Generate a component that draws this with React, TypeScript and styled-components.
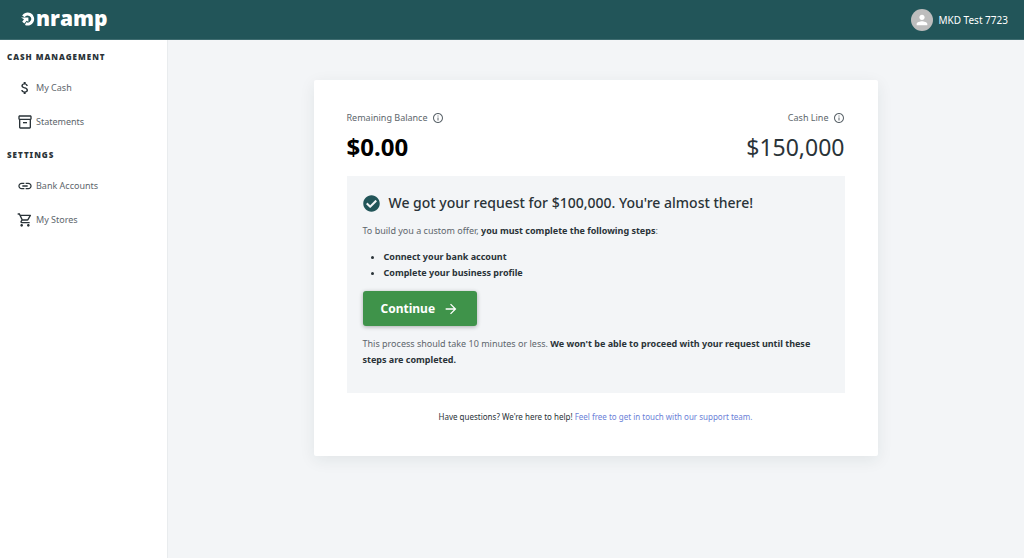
import React from 'react';
import styled, { createGlobalStyle } from 'styled-components';
import {
  MdArrowForward,
  MdAttachMoney,
  MdInfoOutline,
  MdLink,
  MdOutlineInventory2,
  MdOutlineShoppingCart,
  MdPerson,
} from 'react-icons/md';
import { FaCheckCircle } from 'react-icons/fa';

const color = {
  teal: '#225559',
  page: '#f3f5f7',
  ink: '#2a3338',
  muted: '#5d666c',
  green: '#3f934a',
  link: '#6b7fd7',
};

const GlobalStyle = createGlobalStyle`
  *, *::before, *::after { box-sizing: border-box; }
  body {
    margin: 0;
    background: ${color.page};
    color: ${color.ink};
    font-family: 'Noto Sans', 'Open Sans', sans-serif;
    font-size: 9px;
    line-height: 16px;
  }
`;

const Page = styled.div`
  display: flex;
  flex-direction: column;
  min-height: 100vh;
`;

const Header = styled.header`
  display: flex;
  align-items: center;
  justify-content: space-between;
  height: 40px;
  padding: 0 16px 0 21px;
  background: ${color.teal};
  border-bottom: 1px solid #3f6c70;
  color: #fff;
`;

const Logo = styled.a`
  display: flex;
  align-items: center;
  gap: 1px;
  color: #fff;
  font-family: 'Open Sans', sans-serif;
  font-size: 21px;
  font-weight: 800;
  line-height: 32px;
  padding-bottom: 4px;
  text-decoration: none;

  svg {
    margin-top: 3px;
  }
`;

const Account = styled.button`
  display: flex;
  align-items: center;
  gap: 5px;
  padding: 0;
  border: 0;
  background: none;
  color: #fff;
  font: inherit;
  font-size: 10px;
  cursor: pointer;
`;

const Avatar = styled.span`
  display: flex;
  align-items: center;
  justify-content: center;
  width: 22px;
  height: 22px;
  border-radius: 50%;
  background: #bdbdbd;
`;

const Body = styled.div`
  display: flex;
  flex: 1;
`;

const Sidebar = styled.nav`
  flex: none;
  width: 167px;
  padding: 9px 7px;
  background: #fff;
  box-shadow: 1px 0 0 #e9ecee;
`;

const NavHeading = styled.h2`
  margin: 0 0 6px;
  font-size: 8px;
  font-weight: 900;
  line-height: 16px;
  letter-spacing: 1px;
  text-transform: uppercase;
`;

const NavList = styled.ul`
  margin: 0 0 8px;
  padding: 0;
  list-style: none;
`;

const NavLink = styled.a`
  display: flex;
  align-items: center;
  gap: 3px;
  height: 34px;
  padding-left: 10px;
  color: ${color.muted};
  text-decoration: none;

  svg {
    color: ${color.ink};
  }
`;

const Main = styled.main`
  flex: 1;
  padding: 40px 32px;
`;

const Card = styled.section`
  max-width: 564px;
  margin: 0 auto;
  padding: 30px 33px 31px;
  border-radius: 2px;
  background: #fff;
  box-shadow: 0 4px 16px rgba(30, 45, 55, 0.08);
`;

const Balances = styled.div`
  display: flex;
  justify-content: space-between;
  margin-bottom: 13px;
`;

const Balance = styled.div<{ $end?: boolean }>`
  text-align: ${(p) => (p.$end ? 'right' : 'left')};
`;

const BalanceLabel = styled.div<{ $end?: boolean }>`
  display: flex;
  align-items: center;
  justify-content: ${(p) => (p.$end ? 'flex-end' : 'flex-start')};
  gap: 4px;
  color: ${color.muted};
`;

const Amount = styled.div<{ $strong?: boolean }>`
  margin-top: 5px;
  color: ${(p) => (p.$strong ? '#000' : color.ink)};
  font-size: ${(p) => (p.$strong ? 24 : 23)}px;
  font-weight: ${(p) => (p.$strong ? 700 : 400)};
  line-height: 32px;
`;

const Notice = styled.div`
  padding: 15px 16px 25px;
  background: ${color.page};
`;

const NoticeTitle = styled.h1`
  display: flex;
  align-items: center;
  gap: 9px;
  margin: 0 0 8px;
  font-size: 14px;
  font-weight: 500;
  line-height: 24px;

  svg {
    color: ${color.teal};
  }
`;

const Copy = styled.p`
  margin: 0;
  color: ${color.muted};

  strong {
    color: ${color.ink};
  }
`;

const Steps = styled.ul`
  margin: 10px 0;
  padding-left: 21px;
  font-weight: 700;
`;

const Continue = styled.button`
  display: flex;
  align-items: center;
  gap: 8px;
  height: 35px;
  margin-bottom: 10px;
  padding: 0 18px;
  border: 0;
  border-radius: 3px;
  background: ${color.green};
  box-shadow: 0 1px 4px rgba(0, 0, 0, 0.3);
  color: #fff;
  font: inherit;
  font-size: 12px;
  font-weight: 700;
  cursor: pointer;
`;

const Help = styled.p`
  margin: 16px 0 0;
  font-size: 8px;
  text-align: center;

  a {
    color: ${color.link};
    text-decoration: none;
  }
`;

function LogoMark() {
  return (
    <svg width="14" height="14" viewBox="0 0 14 14" aria-hidden="true">
      <path
        d="M2.4 4.4A5 5 0 1 1 4.6 11.6"
        fill="none"
        stroke="currentColor"
        strokeWidth="3"
      />
      <path d="M0 5.4H7.4V9.8L5.6 8.8L3.4 11.4L1.2 9.8L3 7.2Z" fill="currentColor" />
    </svg>
  );
}

const sections = [
  {
    title: 'Cash Management',
    items: [
      { label: 'My Cash', icon: MdAttachMoney },
      { label: 'Statements', icon: MdOutlineInventory2 },
    ],
  },
  {
    title: 'Settings',
    items: [
      { label: 'Bank Accounts', icon: MdLink },
      { label: 'My Stores', icon: MdOutlineShoppingCart },
    ],
  },
];

export default function App() {
  return (
    <>
      <GlobalStyle />
      <Page>
        <Header>
          <Logo href="#" aria-label="onramp">
            <LogoMark />
            nramp
          </Logo>
          <Account type="button">
            <Avatar>
              <MdPerson size={16} color="#fff" />
            </Avatar>
            MKD Test 7723
          </Account>
        </Header>
        <Body>
          <Sidebar>
            {sections.map((section) => (
              <React.Fragment key={section.title}>
                <NavHeading>{section.title}</NavHeading>
                <NavList>
                  {section.items.map(({ label, icon: Icon }) => (
                    <li key={label}>
                      <NavLink href="#">
                        <Icon size={16} />
                        {label}
                      </NavLink>
                    </li>
                  ))}
                </NavList>
              </React.Fragment>
            ))}
          </Sidebar>
          <Main>
            <Card>
              <Balances>
                <Balance>
                  <BalanceLabel>
                    Remaining Balance <MdInfoOutline size={12} />
                  </BalanceLabel>
                  <Amount $strong>$0.00</Amount>
                </Balance>
                <Balance $end>
                  <BalanceLabel $end>
                    Cash Line <MdInfoOutline size={12} />
                  </BalanceLabel>
                  <Amount>$150,000</Amount>
                </Balance>
              </Balances>
              <Notice>
                <NoticeTitle>
                  <FaCheckCircle size={17} />
                  We got your request for $100,000. You're almost there!
                </NoticeTitle>
                <Copy>
                  To build you a custom offer, <strong>you must complete the following steps</strong>:
                </Copy>
                <Steps>
                  <li>Connect your bank account</li>
                  <li>Complete your business profile</li>
                </Steps>
                <Continue type="button">
                  Continue <MdArrowForward size={16} />
                </Continue>
                <Copy>
                  This process should take 10 minutes or less.{' '}
                  <strong>
                    We won't be able to proceed with your request until these steps are completed.
                  </strong>
                </Copy>
              </Notice>
              <Help>
                Have questions? We're here to help!{' '}
                <a href="#">Feel free to get in touch with our support team.</a>
              </Help>
            </Card>
          </Main>
        </Body>
      </Page>
    </>
  );
}
